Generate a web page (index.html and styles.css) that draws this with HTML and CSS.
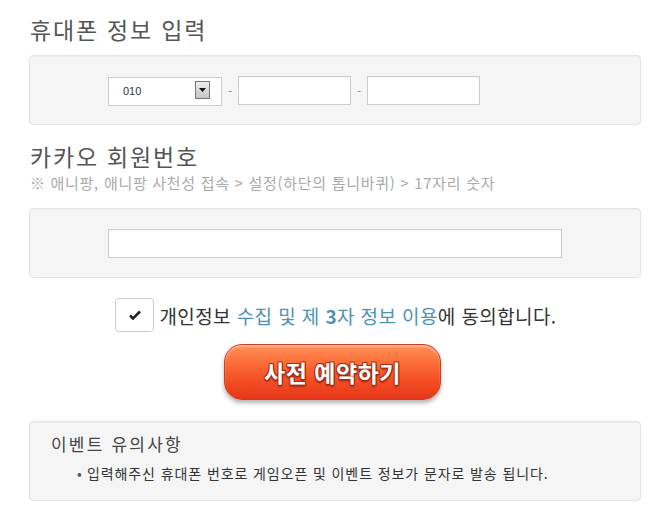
FILE: index.html
```html
<!DOCTYPE html>
<html lang="ko">
<head>
    <meta charset="UTF-8">
    <title>사전 예약</title>
    <link rel="stylesheet" href="styles.css">
</head>
<body>

<div class="container">
    <h2 class="section-title first">휴대폰 정보 입력</h2>
    <div class="panel">
        <div class="phone-row">
            <div class="select-wrap">
                <select class="phone-select">
                    <option selected>010</option>
                    <option>011</option>
                    <option>016</option>
                    <option>017</option>
                    <option>018</option>
                    <option>019</option>
                </select>
                <span class="select-arrow">
                    <svg width="7" height="4" viewBox="0 0 7 4"><path d="M0 0h7L3.5 4z" fill="#111"/></svg>
                </span>
            </div>
            <span class="dash">-</span>
            <input type="text" class="field short">
            <span class="dash">-</span>
            <input type="text" class="field short">
        </div>
    </div>

    <h2 class="section-title">카카오 회원번호</h2>
    <p class="hint">※ 애니팡, 애니팡 사천성 접속 &gt; 설정(하단의 톱니바퀴) &gt; 17자리 숫자</p>
    <div class="panel">
        <div class="phone-row">
            <input type="text" class="field long">
        </div>
    </div>

    <div class="agree-row">
        <span class="check-box">
            <svg width="12" height="10" viewBox="0 0 12 10"><path d="M1 5.5l3 3L11 1.5" fill="none" stroke="#222" stroke-width="2.6"/></svg>
        </span>
        <span class="agree-text">개인정보 <a href="#" class="terms">수집 및 제 <b>3</b>자 정보 이용</a>에 동의합니다.</span>
    </div>

    <div class="submit-row">
        <a href="#" class="reserve-btn">사전 예약하기</a>
    </div>

    <div class="panel notice">
        <h3 class="notice-title">이벤트 유의사항</h3>
        <ul class="notice-list">
            <li>입력해주신 휴대폰 번호로 게임오픈 및 이벤트 정보가 문자로 발송 됩니다.</li>
        </ul>
    </div>
</div>

</body>
</html>
```

FILE: styles.css
```css
body {
    font-family: "Noto Sans CJK KR", "Noto Sans", sans-serif;
    background-color: #fff;
    color: #444;
    margin: 0;
    padding: 0;
}
.container {
    width: 612px;
    padding-left: 29px;
}
.section-title {
    margin: 16px 0 0;
    font-size: 23px;
    font-weight: normal;
    line-height: 30px;
    letter-spacing: 1.8px;
    color: #555;
    padding-left: 1px;
}
.section-title.first {
    margin-top: 14px;
    margin-bottom: 11px;
}
.hint {
    margin: 2px 0 15px;
    font-size: 15px;
    line-height: 20px;
    letter-spacing: 0.7px;
    color: #aaa;
    padding-left: 1px;
}
.panel {
    background-color: #f5f5f5;
    border: 1px solid #e3e3e3;
    border-radius: 4px;
    box-shadow: inset 0 1px 1px rgba(0,0,0,0.03);
}
.phone-row {
    display: flex;
    align-items: center;
    padding: 20px 0 19px 78px;
}
.select-wrap {
    position: relative;
    width: 114px;
    height: 29px;
}
.phone-select {
    appearance: none;
    -webkit-appearance: none;
    width: 114px;
    height: 29px;
    border: 1px solid #ccc;
    border-radius: 0;
    background: #fff;
    font-family: "Liberation Sans", Arial, sans-serif;
    font-size: 11px;
    color: #333;
    padding-left: 14px;
    margin: 0;
}
.select-arrow {
    position: absolute;
    left: 87px;
    top: 5px;
    width: 13px;
    height: 16px;
    border: 1px solid #777;
    background: linear-gradient(#eee, #c4c4c4);
    display: flex;
    align-items: center;
    justify-content: center;
    pointer-events: none;
}
.dash {
    width: 16px;
    text-align: center;
    font-size: 12px;
    color: #888;
}
.field {
    height: 29px;
    box-sizing: border-box;
    border: 1px solid #ccc;
    background: #fff;
    margin: 0;
    padding: 0 6px;
    box-shadow: inset 0 1px 1px rgba(0,0,0,0.04);
}
.field.short {
    width: 113px;
}
.field.long {
    width: 454px;
}
.agree-row {
    display: flex;
    align-items: center;
    justify-content: center;
    gap: 5px;
    margin-top: 20px;
    padding-left: 2px;
}
.check-box {
    width: 37px;
    height: 32px;
    border: 1px solid #ccc;
    border-radius: 4px;
    background: #fff;
    display: flex;
    align-items: center;
    justify-content: center;
}
.agree-text {
    font-size: 19px;
    letter-spacing: 0.4px;
    color: #333;
}
.terms {
    color: #4a93b5;
    text-decoration: none;
}
.submit-row {
    display: flex;
    justify-content: center;
    margin-top: 12px;
    padding-right: 5px;
}
.reserve-btn {
    display: flex;
    align-items: center;
    justify-content: center;
    width: 215px;
    height: 54px;
    border: 1px solid #c8401f;
    border-radius: 18px;
    background: linear-gradient(#ff8f58 0%, #fc6c36 35%, #f24b22 70%, #e6361a 100%);
    box-shadow: inset 0 2px 2px rgba(255,255,255,0.35), 0 3px 4px rgba(0,0,0,0.3);
    color: #fff;
    font-size: 23px;
    font-weight: bold;
    letter-spacing: 0.5px;
    text-decoration: none;
    text-shadow: -1px -1px 0 #a52a12, 1px -1px 0 #a52a12, -1px 1px 0 #a52a12, 1px 1px 0 #a52a12, 0 2px 2px #8a220e;
}
.notice {
    margin-top: 21px;
    padding: 10px 0 17px 21px;
}
.notice-title {
    margin: 0;
    font-size: 17px;
    font-weight: normal;
    line-height: 24px;
    letter-spacing: 2.2px;
    color: #444;
}
.notice-list {
    list-style: none;
    margin: 7px 0 0;
    padding: 0 0 0 26px;
}
.notice-list li {
    font-size: 14px;
    line-height: 20px;
    letter-spacing: 0.9px;
    color: #333;
}
.notice-list li::before {
    content: "•";
    display: inline-block;
    width: 10px;
    color: #555;
}
```
